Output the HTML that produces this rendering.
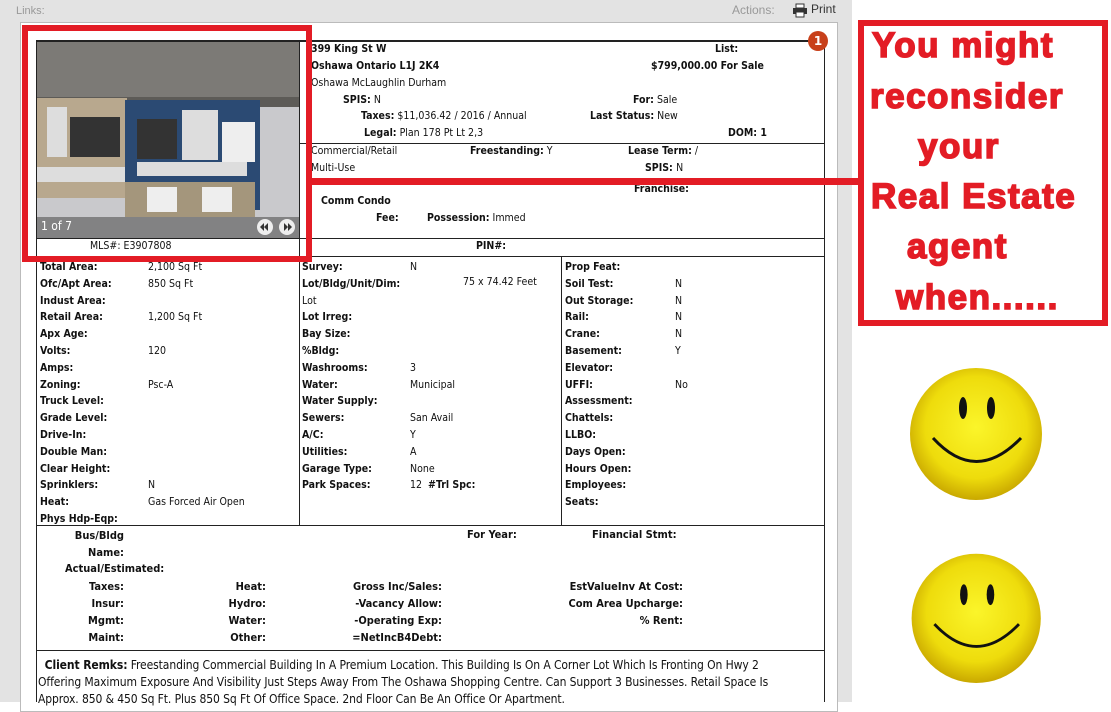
<!DOCTYPE html>
<html><head><meta charset="utf-8"><style>
*{margin:0;padding:0;box-sizing:border-box}
body{width:1111px;height:702px;overflow:hidden;background:#fff;position:relative;font-family:"DejaVu Sans Condensed","DejaVu Sans","Liberation Sans",sans-serif;font-size:10.5px;color:#111}
.a{position:absolute;white-space:nowrap}
.b{font-weight:bold}
.r{text-align:right}
.ln{position:absolute;background:#222}
.n{font-family:"Liberation Sans Narrow","DejaVu Sans Condensed",sans-serif;font-size:11px}
.red{position:absolute;background:#e31c25}
.rt{position:absolute;white-space:nowrap;color:#e31c25;font-family:'Liberation Sans',sans-serif;font-weight:bold;font-size:35px;line-height:50px;letter-spacing:1.5px;-webkit-text-stroke:1.6px #e31c25}
</style></head><body>
<div class="a" style="left:0;top:0;width:852px;height:702px;background:#e3e3e3"></div>
<div class="a" style="left:16px;top:5px;color:#999;font-size:11px;font-family:'Liberation Sans',sans-serif">Links:</div>
<div class="a" style="left:732px;top:3px;color:#999;font-size:12px;font-family:'Liberation Sans',sans-serif">Actions:</div>
<svg class="a" style="left:792px;top:3px" width="16" height="15" viewBox="0 0 16 15"><rect x="4" y="1" width="8" height="4" fill="#fff" stroke="#333"/><rect x="1" y="5" width="14" height="6" fill="#333"/><rect x="4" y="9" width="8" height="5" fill="#fff" stroke="#333"/></svg>
<div class="a" style="left:811px;top:2px;color:#333;font-size:12px;font-family:'Liberation Sans',sans-serif">Print</div>
<div class="a" style="left:20px;top:22px;width:818px;height:690px;background:#fff;border:1px solid #bbb"></div>
<div class="ln" style="left:36px;top:40px;width:789px;height:2px"></div>
<div class="ln" style="left:36px;top:40px;width:1px;height:662px"></div>
<div class="ln" style="left:824px;top:40px;width:1px;height:662px"></div>
<div class="ln" style="left:299px;top:40px;width:1px;height:216px"></div>
<div class="ln" style="left:299px;top:143px;width:526px;height:1px"></div>
<div class="ln" style="left:36px;top:238px;width:789px;height:1px"></div>
<div class="ln" style="left:36px;top:256px;width:789px;height:1px"></div>
<div class="ln" style="left:299px;top:256px;width:1px;height:270px"></div>
<div class="ln" style="left:561px;top:256px;width:1px;height:270px"></div>
<div class="ln" style="left:36px;top:525px;width:789px;height:1px"></div>
<div class="ln" style="left:36px;top:650px;width:789px;height:1px"></div>
<svg class="a" style="left:37px;top:42px" width="262" height="196" viewBox="0 0 262 196">
<rect width="262" height="196" fill="#c9c9cc"/>
<rect width="262" height="60" fill="#7c7a76"/>
<rect y="55" width="262" height="10" fill="#5d5b57"/>
<rect x="0" y="56" width="90" height="100" fill="#b8a88e"/>
<rect x="10" y="65" width="20" height="50" fill="#ddd"/>
<rect x="33" y="75" width="50" height="40" fill="#333"/>
<rect x="88" y="58" width="135" height="110" fill="#2b4a73"/>
<rect x="100" y="77" width="40" height="40" fill="#333"/>
<rect x="145" y="68" width="36" height="50" fill="#ddd"/>
<rect x="185" y="80" width="33" height="40" fill="#eee"/>
<rect x="100" y="120" width="110" height="14" fill="#ddd"/>
<rect x="0" y="125" width="88" height="15" fill="#ddd"/>
<rect x="88" y="140" width="130" height="35" fill="#a4967c"/>
<rect x="110" y="145" width="30" height="25" fill="#eee"/>
<rect x="165" y="145" width="30" height="25" fill="#eee"/>
<rect x="0" y="175" width="262" height="21" fill="rgba(100,100,100,.7)"/>
<circle cx="228" cy="185" r="8" fill="#eee"/><circle cx="250" cy="185" r="8" fill="#eee"/>
<path d="M231 181l-4 4 4 4zM227 181l-4 4 4 4zM247 181l4 4-4 4zM251 181l4 4-4 4z" fill="#333"/>
</svg>
<div class="a" style="left:41px;top:219px;color:#fff;font-size:12px">1 of 7</div>
<div class="a" style="left:90px;top:240px">MLS#: E3907808</div>
<div class="a b" style="left:476px;top:240px">PIN#:</div>
<svg class="a" style="left:807px;top:30px" width="22" height="22"><circle cx="11" cy="11" r="10" fill="#c8401a"/><text x="11" y="15" fill="#fff" font-size="12" font-weight="bold" text-anchor="middle" font-family="DejaVu Sans">1</text></svg>
<div class="a b" style="left:311px;top:43px">399 King St W</div>
<div class="a b" style="left:311px;top:60px">Oshawa Ontario L1J 2K4</div>
<div class="a" style="left:311px;top:77px">Oshawa McLaughlin Durham</div>
<div class="a" style="left:343px;top:94px"><b>SPIS:</b> N</div>
<div class="a" style="left:361px;top:110px"><b>Taxes:</b> $11,036.42 / 2016 / Annual</div>
<div class="a" style="left:364px;top:127px"><b>Legal:</b> Plan 178 Pt Lt 2,3</div>
<div class="a b" style="left:715px;top:43px">List:</div>
<div class="a b" style="left:651px;top:60px">$799,000.00 For Sale</div>
<div class="a" style="left:633px;top:94px"><b>For:</b> Sale</div>
<div class="a" style="left:590px;top:110px"><b>Last Status:</b> New</div>
<div class="a b" style="left:728px;top:127px">DOM: 1</div>
<div class="a" style="left:311px;top:145px">Commercial/Retail</div>
<div class="a" style="left:470px;top:145px"><b>Freestanding:</b> Y</div>
<div class="a" style="left:628px;top:145px"><b>Lease Term:</b> /</div>
<div class="a" style="left:311px;top:162px">Multi-Use</div>
<div class="a b" style="left:645px;top:162px">SPIS: <span style="font-weight:normal">N</span></div>
<div class="a b" style="left:634px;top:183px">Franchise:</div>
<div class="a b" style="left:321px;top:195px">Comm Condo</div>
<div class="a b" style="left:376px;top:212px">Fee:</div>
<div class="a" style="left:427px;top:212px"><b>Possession:</b> Immed</div>
<div class="a" style="left:40px;top:259px;line-height:16.8px"><b>Total Area:<br>Ofc/Apt Area:<br>Indust Area:<br>Retail Area:<br>Apx Age:<br>Volts:<br>Amps:<br>Zoning:<br>Truck Level:<br>Grade Level:<br>Drive-In:<br>Double Man:<br>Clear Height:<br>Sprinklers:<br>Heat:<br>Phys Hdp-Eqp:</b></div>
<div class="a" style="left:148px;top:259px;line-height:16.8px">2,100 Sq Ft<br>850 Sq Ft<br><br>1,200 Sq Ft<br><br>120<br><br>Psc-A<br><br><br><br><br><br>N<br>Gas Forced Air Open</div>
<div class="a" style="left:302px;top:259px;line-height:16.8px"><b>Survey:<br>Lot/Bldg/Unit/Dim:</b><br>Lot<br><b>Lot Irreg:<br>Bay Size:<br>%Bldg:<br>Washrooms:<br>Water:<br>Water Supply:<br>Sewers:<br>A/C:<br>Utilities:<br>Garage Type:<br>Park Spaces:</b></div>
<div class="a" style="left:410px;top:259px;line-height:16.8px">N<br><br><br><br><br><br>3<br>Municipal<br><br>San Avail<br>Y<br>A<br>None<br>12 &nbsp;<b>#Trl Spc:</b></div>
<div class="a" style="left:463px;top:276px">75 x 74.42 Feet</div>
<div class="a" style="left:565px;top:259px;line-height:16.8px"><b>Prop Feat:<br>Soil Test:<br>Out Storage:<br>Rail:<br>Crane:<br>Basement:<br>Elevator:<br>UFFI:<br>Assessment:<br>Chattels:<br>LLBO:<br>Days Open:<br>Hours Open:<br>Employees:<br>Seats:</b></div>
<div class="a" style="left:675px;top:259px;line-height:16.8px"><br>N<br>N<br>N<br>N<br>Y<br><br>No</div>
<div class="n b">
<div class="a r" style="left:40px;width:84px;top:528px;line-height:16.9px">Bus/Bldg<br>Name:</div>
<div class="a" style="left:65px;top:562px">Actual/Estimated:</div>
<div class="a r" style="left:40px;width:84px;top:579px;line-height:16.9px">Taxes:<br>Insur:<br>Mgmt:<br>Maint:</div>
<div class="a r" style="left:180px;width:86px;top:579px;line-height:16.9px">Heat:<br>Hydro:<br>Water:<br>Other:</div>
<div class="a r" style="left:300px;width:142px;top:579px;line-height:16.9px">Gross Inc/Sales:<br>-Vacancy Allow:<br>-Operating Exp:<br>=NetIncB4Debt:</div>
<div class="a r" style="left:540px;width:143px;top:579px;line-height:16.9px">EstValueInv At Cost:<br>Com Area Upcharge:<br>% Rent:</div>
<div class="a" style="left:467px;top:528px">For Year:</div>
<div class="a" style="left:592px;top:528px">Financial Stmt:</div>
</div>
<div class="a n" style="left:38px;top:657px;line-height:17px;width:785px;overflow:hidden;font-size:12px;letter-spacing:-0.1px">&nbsp;&nbsp;<b>Client Remks:</b> Freestanding Commercial Building In A Premium Location. This Building Is On A Corner Lot Which Is Fronting On Hwy 2<br>Offering Maximum Exposure And Visibility Just Steps Away From The Oshawa Shopping Centre. Can Support 3 Businesses. Retail Space Is<br>Approx. 850 &amp; 450 Sq Ft. Plus 850 Sq Ft Of Office Space. 2nd Floor Can Be An Office Or Apartment.</div>
<div class="red" style="left:22px;top:25px;width:290px;height:6px"></div>
<div class="red" style="left:22px;top:256px;width:290px;height:6px"></div>
<div class="red" style="left:22px;top:25px;width:6px;height:237px"></div>
<div class="red" style="left:306px;top:25px;width:6px;height:237px"></div>
<div class="red" style="left:306px;top:178px;width:556px;height:7px"></div>
<div class="red" style="left:858px;top:20px;width:250px;height:6px"></div>
<div class="red" style="left:858px;top:320px;width:250px;height:6px"></div>
<div class="red" style="left:858px;top:20px;width:6px;height:306px"></div>
<div class="red" style="left:1102px;top:20px;width:6px;height:306px"></div>
<div class="rt" style="left:872px;top:21px">You might</div>
<div class="rt" style="left:870px;top:72px">reconsider</div>
<div class="rt" style="left:918px;top:122px">your</div>
<div class="rt" style="left:871px;top:172px">Real Estate</div>
<div class="rt" style="left:907px;top:222px">agent</div>
<div class="rt" style="left:896px;top:273px">when......</div>
<svg class="a" style="left:900px;top:360px" width="160" height="160" viewBox="0 0 160 160">
<defs><radialGradient id="g" cx="50%" cy="45%" r="55%"><stop offset="0" stop-color="#fbf52a"/><stop offset=".7" stop-color="#eedc0c"/><stop offset="1" stop-color="#c9a800"/></radialGradient></defs>
<circle cx="76" cy="74" r="66" fill="url(#g)"/>
<ellipse cx="63" cy="48" rx="4" ry="11" fill="#111"/><ellipse cx="91" cy="48" rx="4" ry="11" fill="#111"/>
<path d="M33 78 Q76 125 121 78" fill="none" stroke="#111" stroke-width="3"/>
</svg>
<svg class="a" style="left:900px;top:550px" width="160" height="152" viewBox="0 0 160 160">
<circle cx="76" cy="72" r="68" fill="url(#g)"/>
<ellipse cx="63" cy="47" rx="4" ry="11" fill="#111"/><ellipse cx="91" cy="47" rx="4" ry="11" fill="#111"/>
<path d="M32 78 Q76 125 121 78" fill="none" stroke="#111" stroke-width="3"/>
</svg>
</body></html>
